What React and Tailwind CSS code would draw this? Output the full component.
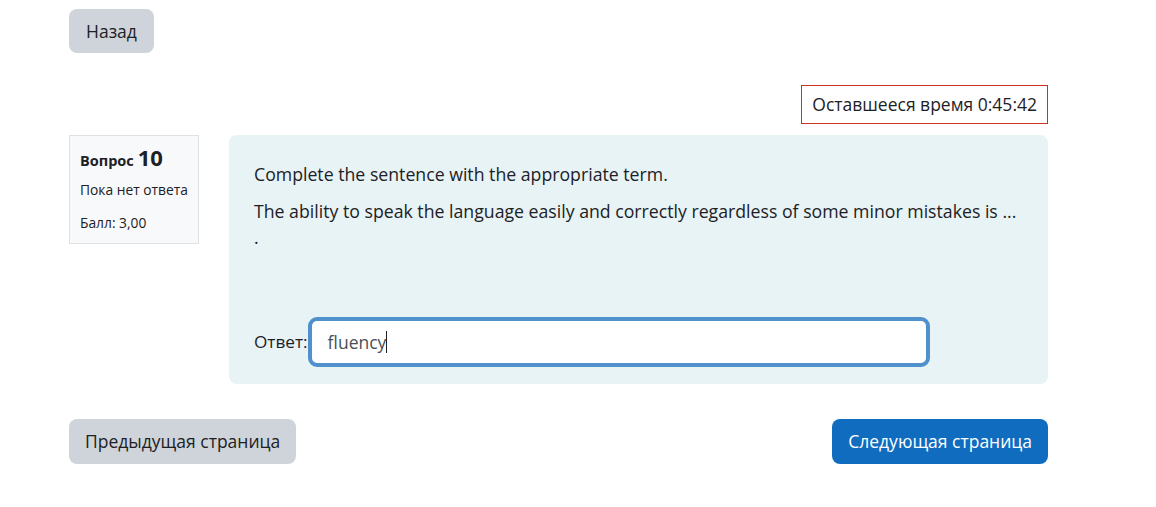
import React from "react";

const App = () => {
  return (
    <div
      className="min-h-[507px] bg-white text-[#1d2125]"
      style={{ fontFamily: '"Open Sans", "Noto Sans", sans-serif' }}
    >
      <div className="ml-[69px] w-[979px] pt-[9px]">
        <button className="h-[44px] px-[17px] rounded-[8px] bg-[#ced4da] text-[17.5px]">
          Назад
        </button>

        <div className="flex justify-end mt-[32px]">
          <div className="h-[39px] px-[10px] flex items-center border border-[#ca3120] text-[17.5px]">
            Оставшееся время 0:45:42
          </div>
        </div>

        <div className="flex gap-[30px] mt-[11px]">
          <div className="w-[130px] h-[109px] shrink-0 bg-[#f8f9fa] border border-[#dee2e6] pl-[10px] pt-[5px] whitespace-nowrap">
            <div className="flex items-baseline gap-[4px] font-bold">
              <span className="text-[14.5px]">Вопрос</span>
              <span className="text-[22px]">10</span>
            </div>
            <div className="text-[13.8px] mt-[6px]">Пока нет ответа</div>
            <div className="text-[13.8px] mt-[12px]">Балл: 3,00</div>
          </div>

          <div className="flex-1 h-[249px] bg-[#e7f3f5] rounded-[8px] px-[25px] pt-[26px] flex flex-col">
            <p className="text-[17.7px] leading-[26px]">
              Complete the sentence with the appropriate term.
            </p>
            <p className="text-[17.7px] leading-[26px] mt-[11px]">
              <span className="whitespace-nowrap">
                The ability to speak the language easily and correctly regardless of some minor mistakes is ...
              </span>
              <br />.
            </p>
            <div className="flex items-center mt-auto mb-[17px]">
              <span className="text-[17.2px]">Ответ:</span>
              <div className="w-[622px] h-[50px] rounded-[9px] border-[4px] border-[#4f90cd] bg-white flex items-center pl-[16px] text-[17.5px] text-[#495057]">
                fluency<span className="inline-block w-[1px] h-[22px] bg-[#1d2125]"></span>
              </div>
            </div>
          </div>
        </div>

        <div className="flex justify-between mt-[35px]">
          <button className="h-[45px] px-[16px] rounded-[8px] bg-[#ced4da] text-[17.5px]">
            Предыдущая страница
          </button>
          <button className="h-[45px] px-[16px] rounded-[8px] bg-[#0f6cbf] text-white text-[17.5px]">
            Следующая страница
          </button>
        </div>
      </div>
    </div>
  );
};

export default App;
